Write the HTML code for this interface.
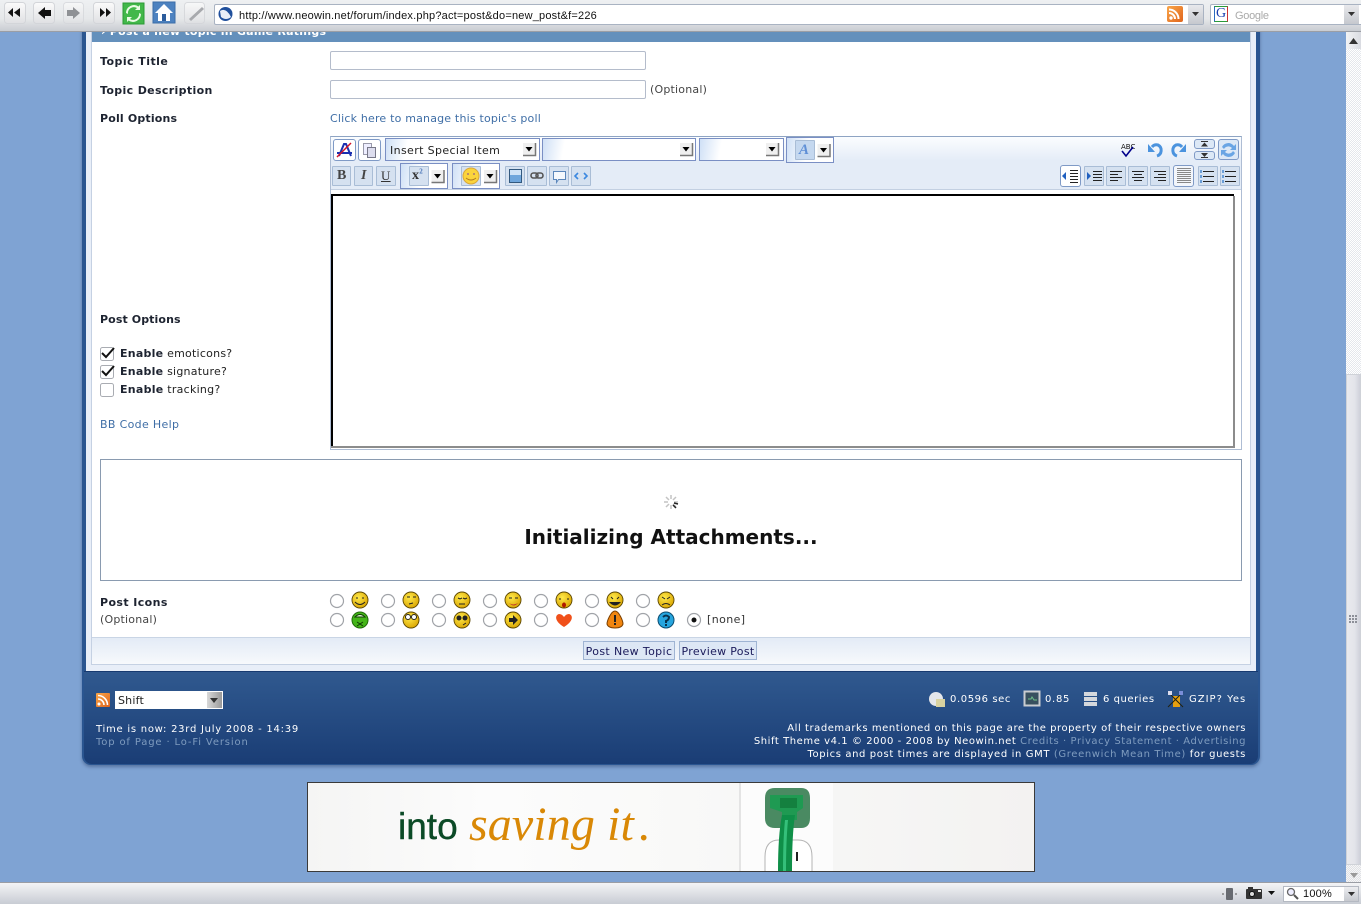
<!DOCTYPE html>
<html><head><meta charset="utf-8"><title>Post a new topic</title>
<style>
html,body{margin:0;padding:0;width:1361px;height:904px;overflow:hidden;background:#7fa3d3}
.a{position:absolute}
.t{position:absolute;white-space:nowrap;font:11px/14px "DejaVu Sans","Liberation Sans",sans-serif;color:#222;letter-spacing:.2px}
.b{font-weight:bold;color:#1d2330}
.l{color:#3f6ea6}
.f{font-size:10px;line-height:13px;color:#fff}
.f span{color:#7f9cbf}
.inp{position:absolute;left:330px;width:314px;height:17px;background:#fff;border:1px solid #b4bccb;border-radius:2px}
.sel{position:absolute;box-sizing:border-box;border:1px solid #7a8fc4;background:linear-gradient(100deg,#cfe0f6 0,#fff 22px)}
.btn{position:absolute;box-sizing:border-box;background:#d5e1f0;border:1px solid #a9bdd6;border-radius:1px}
.wb{background:#fff;border:1px solid #7f9ac6;border-radius:3px}
.sb{position:absolute;box-sizing:border-box;border:1px solid #9fb4d3;background:#dde7f5;font:11px/16px "DejaVu Sans",sans-serif;padding-top:2px;color:#1a1a5a;text-align:center;white-space:nowrap}
</style></head><body>

<!-- wrapper -->
<div class="a" style="left:82px;top:0;width:1178px;height:765px;background:#2a5590;border-radius:0 0 9px 9px;box-shadow:0 2px 3px rgba(40,60,100,.45)"></div>
<div class="a" style="left:86px;top:0;width:1170px;height:671px;background:#e8eef8"></div>
<div class="a" style="left:92px;top:0;width:1158px;height:664px;background:#fff;border:solid #c5d1e3;border-width:0 1px 1px 1px;margin-left:-1px"></div>
<div class="a" style="left:92px;top:25px;width:1158px;height:17px;background:#6490bc"></div>
<div class="t" style="left:101px;top:25px;color:#fff;font-weight:bold;letter-spacing:.25px">&#8250; Post a new topic in Game Ratings</div>

<!-- form labels -->
<div class="t b" style="left:100px;top:55px;letter-spacing:.45px">Topic Title</div>
<div class="t b" style="left:100px;top:84px;letter-spacing:.35px">Topic Description</div>
<div class="t b" style="left:100px;top:112px;letter-spacing:.17px">Poll Options</div>
<div class="inp" style="top:51px"></div>
<div class="inp" style="top:80px"></div>
<div class="t" style="left:650px;top:83px;color:#444">(Optional)</div>
<div class="t l" style="left:330px;top:112px;letter-spacing:.19px">Click here to manage this topic's poll</div>

<div class="t b" style="left:100px;top:313px;letter-spacing:.1px">Post Options</div>
<div class="t" style="left:120px;top:347px;letter-spacing:.24px"><b class="b">Enable</b> emoticons?</div>
<div class="t" style="left:120px;top:365px;letter-spacing:.24px"><b class="b">Enable</b> signature?</div>
<div class="t" style="left:120px;top:383px;letter-spacing:.27px"><b class="b">Enable</b> tracking?</div>
<div class="t l" style="left:100px;top:418px;letter-spacing:.33px">BB Code Help</div>

<!-- editor -->
<div class="a" style="left:330px;top:136px;width:910px;height:312px;border:1px solid #aebdd4;border-top-color:#8ea4c3;background:#fff"></div>
<div class="a" style="left:331px;top:137px;width:910px;height:52px;background:linear-gradient(#fbfdff,#e4ecf7 24px);border-bottom:1px solid #c3d0e2"></div>
<div class="a" style="left:331px;top:194px;width:901px;height:252px;background:#fff;border:solid #000;border-width:2px 0 0 2px"></div>
<div class="a" style="left:1233px;top:196px;width:2px;height:252px;background:#8c8c8c"></div>
<div class="a" style="left:331px;top:446px;width:904px;height:2px;background:#8c8c8c"></div>

<div class="btn wb" style="left:333px;top:139px;width:23px;height:22px"></div>
<div class="btn wb" style="left:358px;top:139px;width:23px;height:22px"></div>
<div class="sel" style="left:385px;top:138px;width:155px;height:23px"></div>
<div class="t" style="left:390px;top:144px;color:#222;letter-spacing:.37px">Insert Special Item</div>
<div class="sel" style="left:542px;top:138px;width:154px;height:23px"></div>
<div class="sel" style="left:699px;top:138px;width:85px;height:23px"></div>
<div class="sel" style="left:786px;top:137px;width:48px;height:26px"></div>
<div class="btn" style="left:795px;top:140px;width:20px;height:20px;background:#c5d8ef"></div>
<div class="btn" style="left:332px;top:166px;width:19px;height:20px"></div>
<div class="btn" style="left:354px;top:166px;width:19px;height:20px"></div>
<div class="btn" style="left:376px;top:166px;width:20px;height:20px"></div>
<div class="sel" style="left:400px;top:163px;width:48px;height:26px"></div>
<div class="btn" style="left:409px;top:166px;width:20px;height:20px"></div>
<div class="sel" style="left:452px;top:163px;width:48px;height:26px"></div>
<div class="btn" style="left:461px;top:166px;width:20px;height:20px"></div>
<div class="btn" style="left:505px;top:166px;width:20px;height:20px"></div>
<div class="btn" style="left:527px;top:166px;width:20px;height:20px"></div>
<div class="btn" style="left:549px;top:166px;width:20px;height:20px"></div>
<div class="btn" style="left:571px;top:166px;width:20px;height:20px"></div>
<div class="btn wb" style="left:1194px;top:139px;width:21px;height:10px;background:#dce8f6"></div>
<div class="btn wb" style="left:1194px;top:151px;width:21px;height:9px;background:#dce8f6"></div>
<div class="btn wb" style="left:1218px;top:139px;width:21px;height:21px;background:#dce8f6"></div>
<div class="btn wb" style="left:1060px;top:165px;width:21px;height:22px"></div>
<div class="btn" style="left:1084px;top:166px;width:20px;height:20px"></div>
<div class="btn" style="left:1106px;top:166px;width:20px;height:20px"></div>
<div class="btn" style="left:1128px;top:166px;width:20px;height:20px"></div>
<div class="btn" style="left:1150px;top:166px;width:20px;height:20px"></div>
<div class="btn wb" style="left:1173px;top:165px;width:21px;height:22px;background:#f3f6fb"></div>
<div class="btn" style="left:1198px;top:166px;width:20px;height:20px"></div>
<div class="btn" style="left:1220px;top:166px;width:20px;height:20px"></div>
<div class="t" style="left:337px;top:168px;font:bold 14px/16px 'Liberation Serif',serif;color:#444">B</div>
<div class="t" style="left:361px;top:168px;font:italic bold 14px/16px 'Liberation Serif',serif;color:#444">I</div>
<div class="t" style="left:381px;top:168px;font:13px/16px 'Liberation Serif',serif;color:#333;text-decoration:underline">U</div>
<div class="t" style="left:412px;top:168px;font:bold 14px/16px 'Liberation Serif',serif;color:#333">x<sup style="font-size:7px;line-height:0;color:#4b76b8">2</sup></div>
<div class="t" style="left:799px;top:142px;font:italic bold 15px/17px 'Liberation Serif',serif;color:#5f8fd6">A</div>
<div class="t" style="left:1121px;top:143px;font:7px/8px 'DejaVu Sans',sans-serif;color:#111;letter-spacing:0">ABC</div>

<!-- attachments -->
<div class="a" style="left:100px;top:459px;width:1140px;height:120px;border:1px solid #8a9bb0;background:#fff"></div>
<div class="t" style="left:100px;width:1142px;text-align:center;top:525px;font:bold 20px/25px 'DejaVu Sans',sans-serif;color:#111;letter-spacing:0">Initializing Attachments...</div>

<!-- post icons -->
<div class="t b" style="left:100px;top:596px;letter-spacing:.4px">Post Icons</div>
<div class="t" style="left:100px;top:613px;color:#444">(Optional)</div>
<div class="t" style="left:707px;top:613px;color:#333;letter-spacing:.4px">[none]</div>

<!-- submit bar -->
<div class="a" style="left:92px;top:637px;width:1158px;height:26px;border-top:1px solid #c9d5e5;background:linear-gradient(#e3ebf6,#f7f9fc)"></div>
<div class="sb" style="left:583px;top:641px;width:92px;height:19px;letter-spacing:.36px">Post New Topic</div>
<div class="sb" style="left:679px;top:641px;width:78px;height:19px;letter-spacing:.3px">Preview Post</div>

<!-- footer -->
<div class="a" style="left:84px;top:671px;width:1174px;height:92px;background:linear-gradient(#30598f,#1a3d75);border-top:1px solid #173a70;border-radius:0 0 8px 8px"></div>
<div class="a" style="left:115px;top:691px;width:108px;height:18px;background:#fff"></div>
<div class="a" style="left:207px;top:692px;width:15px;height:16px;background:linear-gradient(90deg,#d8d8d8,#9a9a9a)"></div>
<div class="t" style="left:118px;top:694px;color:#222">Shift</div>
<div class="t f" style="left:96px;top:723px;letter-spacing:.74px">Time is now: 23rd July 2008 - 14:39</div>
<div class="t f" style="left:96px;top:736px;letter-spacing:.85px"><span>Top of Page &#183; Lo-Fi Version</span></div>
<div class="t f" style="left:950px;top:693px;letter-spacing:.6px">0.0596 sec</div>
<div class="t f" style="left:1045px;top:693px;letter-spacing:.7px">0.85</div>
<div class="t f" style="left:1103px;top:693px;letter-spacing:.55px">6 queries</div>
<div class="t f" style="left:1189px;top:693px;letter-spacing:1px">GZIP? Yes</div>
<div class="t f" style="right:115px;top:722px;letter-spacing:.55px">All trademarks mentioned on this page are the property of their respective owners</div>
<div class="t f" style="right:115px;top:735px;letter-spacing:.56px">Shift Theme v4.1 &#169; 2000 - 2008 by Neowin.net <span>Credits &#183; Privacy Statement &#183; Advertising</span></div>
<div class="t f" style="right:115px;top:748px;letter-spacing:.62px">Topics and post times are displayed in GMT <span>(Greenwich Mean Time)</span> for guests</div>

<!-- ad -->
<div class="a" style="left:307px;top:782px;width:726px;height:88px;border:1px solid #3a3a3a;background:linear-gradient(90deg,#f5f5f4,#fcfcfc 25%,#f8f8f7 60%,#f3f2f1)"></div>
<div class="a" style="left:739px;top:783px;width:92px;height:88px;background:#fcfcfc;border-left:2px solid #e4e4e4"></div>
<div class="t" style="left:398px;top:805px;font:37px/44px 'Liberation Sans',sans-serif;color:#0b4a26;letter-spacing:0;-webkit-text-stroke:.4px #0b4a26">into</div>
<div class="t" style="left:469px;top:797px;font:italic 48px/56px 'Liberation Serif',serif;color:#d98806;letter-spacing:.1px">saving it<span style="margin-left:5px">.</span></div>

<!-- scrollbar -->
<div class="a" style="left:1346px;top:31px;width:15px;height:851px;background:repeating-conic-gradient(#fff 0 25%,#e4e7ec 0 50%) 0 0/2px 2px"></div>
<div class="a" style="left:1346px;top:374px;width:15px;height:491px;box-sizing:border-box;border:1px solid #cfd2d8;background:linear-gradient(90deg,#e9eaee,#e3e4ea 60%,#cfd1da)"></div>
<div class="a" style="left:1346px;top:32px;width:15px;height:17px;background:linear-gradient(90deg,#f2f3f5,#d9dbe1)"></div>
<div class="a" style="left:1346px;top:865px;width:15px;height:17px;background:repeating-conic-gradient(#f6f6f6 0 25%,#dfe1e6 0 50%) 0 0/2px 2px"></div>

<!-- top bar -->
<div class="a" style="left:0;top:0;width:1361px;height:31px;background:linear-gradient(#eef0f2,#e6e8ea 60%,#c9ccd2);border-bottom:1px solid #9b9ea5"></div>
<div class="a" style="left:214px;top:4px;width:988px;height:19px;background:#fff;border:1px solid #a9b3c2;border-radius:2px"></div>
<div class="a" style="left:1188px;top:5px;width:15px;height:19px;background:linear-gradient(#e8e9ec,#c5c8ce)"></div>
<div class="a" style="left:1210px;top:4px;width:151px;height:19px;background:#fff;border:1px solid #a9b3c2;border-radius:2px 0 0 2px"></div>
<div class="a" style="left:1344px;top:5px;width:15px;height:19px;background:linear-gradient(#e8e9ec,#c5c8ce)"></div>
<div class="t" style="left:239px;top:9px;font:11px/14px 'Liberation Sans',sans-serif;color:#111;letter-spacing:.2px">http://www.neowin.net/forum/index.php?act=post&amp;do=new_post&amp;f=226</div>
<div class="t" style="left:1235px;top:9px;font:11px/14px 'Liberation Sans',sans-serif;color:#aaa;letter-spacing:-.3px">Google</div>
<div class="t" style="left:1214px;top:6px;width:14px;height:16px;box-sizing:border-box;border:1px solid;border-color:#2a9a3a #c33 #2a9a3a #2a6ac0;font:14px/14px 'Liberation Serif',serif;color:#1a3fb0;text-align:center;letter-spacing:0">G</div>

<!-- status bar -->
<div class="a" style="left:0;top:882px;width:1361px;height:22px;background:linear-gradient(#f3f4f6,#e2e4e8 40%,#c8ccd4);border-top:1px solid #9a9da4;box-sizing:border-box"></div>
<div class="a" style="left:1283px;top:886px;width:76px;height:16px;background:#fff;border:1px solid #b4b9c2;box-sizing:border-box"></div>
<div class="a" style="left:1344px;top:887px;width:14px;height:14px;background:linear-gradient(#ecedf0,#c6c9cf)"></div>
<div class="t" style="left:1303px;top:887px;color:#111;font:11px/14px 'Liberation Sans',sans-serif;letter-spacing:.2px">100%</div>

<!-- icons -->
<svg class="a" style="left:0;top:0" width="1361" height="904" viewBox="0 0 1361 904" xmlns="http://www.w3.org/2000/svg">
<defs>
<radialGradient id="y" cx=".4" cy=".35" r=".7"><stop offset="0" stop-color="#ffe94a"/><stop offset="1" stop-color="#d9a400"/></radialGradient>
<linearGradient id="tb" x1="0" y1="0" x2="0" y2="1"><stop offset="0" stop-color="#fbfbfb"/><stop offset="1" stop-color="#dfe0e3"/></linearGradient>
<linearGradient id="rss" x1="0" y1="0" x2="1" y2="1"><stop offset="0" stop-color="#f9a64a"/><stop offset="1" stop-color="#e0651c"/></linearGradient>
<g id="r"><circle r="6.500" fill="#fff" stroke="#a0a3a8" stroke-width="1.200"/></g>
<g id="s"><circle r="8" fill="url(#y)" stroke="#5a4500" stroke-width=".9"/></g>
<g id="dd"><rect x="-6" y="-6" width="12" height="12" fill="#efefef"/><path d="M-6 6.500H6.500V-6" fill="none" stroke="#777" stroke-width="1.500"/><path d="M-3.500-2H3.500L0 2.500Z" fill="#000"/></g>
<clipPath id="adc"><rect x="741" y="783" width="92" height="88"/></clipPath>
</defs>

<!-- top bar buttons -->
<g stroke="#d3d5d9" fill="url(#tb)">
<rect x="4.500" y="2.500" width="21" height="21" rx="3"/><rect x="33.500" y="2.500" width="21" height="21" rx="3"/><rect x="63.500" y="2.500" width="20" height="21" rx="3" opacity=".7"/><rect x="93.500" y="2.500" width="21" height="21" rx="3"/><rect x="184.500" y="2.500" width="20" height="21" rx="3" opacity=".8"/>
</g>
<path d="M13 8v9l-5-4.500zM20 8v9l-6-4.500z" fill="#111"/>
<path d="M38 13l7-6v3h6v6h-6v3z" fill="#111"/>
<path d="M80 13l-7-6v3h-6v6h6v3z" fill="#8f9195"/>
<path d="M100 8v9l5-4.500zM106 8v9l5-4.500z" fill="#111"/>
<rect x="123" y="3" width="21" height="21" fill="#42b84a" stroke="#2b9a36"/>
<path d="M128 14a6 6 0 0 1 9-6l-2 2h5v-5l-1.500 1.500A8 8 0 0 0 126 13zM139 13a6 6 0 0 1-9 6l2-2h-5v5l1.500-1.500A8 8 0 0 0 141 14z" fill="#e9fbe4"/>
<rect x="153" y="2" width="22" height="21" fill="#4d82c0" stroke="#3b6da8"/>
<path d="M164 4l-9 9h3v8h12v-8h3z" fill="#fff"/><rect x="162" y="14" width="4" height="7" fill="#2b5c9c"/>
<path d="M189 19l13-12 2 2-13 12z" fill="#a7a9ad"/>
<circle cx="225.500" cy="14" r="7" fill="#1f4f9c"/><path d="M220 11q6-4 11 6q-5 4-10 0z" fill="#e8eef8"/>
<rect x="1167" y="6" width="16" height="16" rx="2" fill="url(#rss)"/>
<circle cx="1171" cy="18" r="1.700" fill="#fff"/><path d="M1169 13a6 6 0 0 1 6 6M1169 9.500a9.500 9.500 0 0 1 9.500 9.500" fill="none" stroke="#fff" stroke-width="2"/>
<path d="M1192 12h7l-3.500 4z" fill="#333"/><path d="M1348 12h7l-3.500 4z" fill="#333"/>

<!-- editor icons -->
<path d="M339 156l5-12h2l5 12" fill="none" stroke="#1a2fb0" stroke-width="2"/><path d="M337 153h15" stroke="#1a2fb0" stroke-width="2"/><path d="M337 157L351 143" stroke="#d3142a" stroke-width="1.500"/>
<rect x="363.500" y="143.500" width="8" height="11" fill="#eef" stroke="#99a"/><rect x="367.500" y="147.500" width="8" height="10" fill="#dde" stroke="#778"/>
<use href="#dd" x="529" y="149"/><use href="#dd" x="686" y="149"/><use href="#dd" x="772" y="149"/><use href="#dd" x="823.500" y="150"/><use href="#dd" x="437.500" y="176"/><use href="#dd" x="490" y="176"/>
<circle cx="471" cy="176" r="8" fill="#fbd43c" stroke="#d9a73a"/><circle cx="468" cy="174" r="1" fill="#a77"/><circle cx="474" cy="174" r="1" fill="#a77"/><path d="M466 178q5 4 10 0" fill="none" stroke="#b07a20"/>
<rect x="509.500" y="169.500" width="12" height="13" fill="#6fa6dc" stroke="#33597f"/><rect x="510" y="170" width="11" height="5" fill="#cfe3f7"/>
<g fill="none" stroke="#555" stroke-width="1.600"><rect x="531" y="173" width="7" height="5" rx="2.500"/><rect x="536" y="173" width="7" height="5" rx="2.500"/></g>
<path d="M553.500 171.500h12v8h-7l-2 3v-3h-3z" fill="#f4f8fd" stroke="#5a86bb"/>
<path d="M578 173l-3 3 3 3M584 173l3 3-3 3" fill="none" stroke="#3b88e0" stroke-width="1.600"/>
<path d="M1122 151l4 5 7-9" fill="none" stroke="#00008b" stroke-width="1.600"/>
<path d="M1157 156a6 6 0 0 0 1-11 6 6 0 0 0-6 2" fill="none" stroke="#4b93de" stroke-width="3"/><path d="M1148 144v8h7z" fill="#4b93de"/>
<path d="M1177 156a6 6 0 0 1-1-11 6 6 0 0 1 6 2" fill="none" stroke="#4b93de" stroke-width="3"/><path d="M1186 144v8h-7z" fill="#4b93de"/>
<path d="M1201 146.500l3.500-4 3.500 4zM1201 153l3.500 4 3.500-4z" fill="#333"/><path d="M1201 141.500h7M1201 157.500h7" stroke="#333"/>
<path d="M1222 147a7 7 0 0 1 12-1l2-2v6h-6l2-2a5 5 0 0 0-8 1zM1235 153a7 7 0 0 1-12 1l-2 2v-6h6l-2 2a5 5 0 0 0 8-1z" fill="#6aa5e4"/>
<g stroke="#222">
<path d="M1070 170.500h8M1070 173.500h8M1070 176.500h8M1070 179.500h8M1070 182.500h8"/><path d="M1093 171.500h9M1093 174.500h9M1093 177.500h9M1093 180.500h9"/>
<path d="M1110 171.500h12M1110 174.500h8M1110 177.500h12M1110 180.500h8"/><path d="M1132 171.500h12M1134 174.500h8M1132 177.500h12M1134 180.500h8"/><path d="M1154 171.500h12M1158 174.500h8M1154 177.500h12M1158 180.500h8"/>
<path d="M1203 171.500h11M1203 176.500h11M1203 181.500h11M1225 171.500h11M1225 176.500h11M1225 181.500h11"/>
</g>
<path d="M1066 172l-4 4 4 4zM1087 172l4 4-4 4z" fill="#2060c0"/>
<path d="M1177 168.500h14M1177 170.500h14M1177 172.500h14M1177 174.500h14M1177 176.500h14M1177 178.500h14M1177 180.500h14M1177 182.500h14" stroke="#888"/>
<path d="M1200 170h2v3h-2zM1200 175h2v3h-2zM1200 180h2v3h-2zM1222 170h2v3h-2zM1222 175h2v3h-2zM1222 180h2v3h-2z" fill="#6a9ed8"/>

<!-- checkboxes -->
<g fill="#fff" stroke="#a9acb2"><rect x="100.500" y="347.500" width="13" height="13" rx="2"/><rect x="100.500" y="365.500" width="13" height="13" rx="2"/><rect x="100.500" y="383.500" width="13" height="13" rx="2"/></g>
<path d="M102 353l4 4 8-9M102 371l4 4 8-9" fill="none" stroke="#111" stroke-width="2"/>

<!-- spinner -->
<g stroke="#c4c4c4" stroke-width="1.500">
<path d="M671 495v4M671 505v4M664 502h4M674 502h4M666 497l3 3M673 504l3 3M666 507l3-3M673 500l3-3"/>
<path d="M673 505l3 3M674 503l4 1" stroke="#222"/>
</g>

<!-- post icon radios -->
<use href="#r" x="337" y="601"/><use href="#r" x="388" y="601"/><use href="#r" x="439" y="601"/><use href="#r" x="490" y="601"/><use href="#r" x="541" y="601"/><use href="#r" x="592" y="601"/><use href="#r" x="643" y="601"/>
<use href="#r" x="337" y="620"/><use href="#r" x="388" y="620"/><use href="#r" x="439" y="620"/><use href="#r" x="490" y="620"/><use href="#r" x="541" y="620"/><use href="#r" x="592" y="620"/><use href="#r" x="643" y="620"/><use href="#r" x="694" y="620"/>
<circle cx="694" cy="620" r="2.500" fill="#111"/>
<use href="#s" x="360" y="600"/><use href="#s" x="411" y="600"/><use href="#s" x="462" y="600"/><use href="#s" x="513" y="600"/><use href="#s" x="564" y="600"/><use href="#s" x="615" y="600"/><use href="#s" x="666" y="600"/>
<use href="#s" x="411" y="620"/><use href="#s" x="462" y="620"/><use href="#s" x="513" y="620"/>
<g fill="none" stroke="#222" stroke-width="1">
<path d="M357 597v2M363 597v2M355 602q5 5 10 0"/><path d="M407 597h3M413 597h3M409 604l4-1"/><path d="M458 598l2 1 2-1M463 598l2 1 2-1M459 604h6"/>
<path d="M509 598h3M515 598h3"/><path d="M560 598v2M568 598v2"/><path d="M611 597l2 2M619 597l-2 2"/><path d="M662 597l3 2M670 597l-3 2M662 605q4-3 8 0"/>
<path d="M463 625l3-2"/>
</g>
<path d="M509 603q4 3 9 0q-4 5-9 0z" fill="#c0392b"/><ellipse cx="564" cy="605" rx="2" ry="2.500" fill="#b01a00"/><path d="M609 602h12q-6 7-12 0z" fill="#222"/>
<circle cx="360" cy="620" r="8" fill="#44b518" stroke="#1f6a08"/><path d="M355 617q5-5 10 0zM357 622l6 4M363 622l-6 4" stroke="#0f3a05" fill="#dff7d0"/>
<circle cx="408" cy="617" r="2.500" fill="#fff" stroke="#222"/><circle cx="414" cy="617" r="2.500" fill="#fff" stroke="#222"/>
<circle cx="459" cy="618" r="2.500" fill="#222"/><circle cx="465" cy="618" r="2.500" fill="#222"/>
<path d="M509 618h4v-3l5 5-5 5v-3h-4z" fill="#222"/>
<path d="M564 627c-10-6-9-12-5-13q3 0 5 3q2-3 5-3c4 1 5 7-5 13z" fill="#f0501a"/>
<path d="M615 611c4 0 8 10 8 13q-1 4-8 4t-8-4c0-3 4-13 8-13z" fill="#f0850f" stroke="#7a3f00"/><rect x="614" y="615" width="2" height="7" fill="#222"/><rect x="614" y="623" width="2" height="2" fill="#222"/>
<circle cx="666" cy="620" r="8" fill="#26a5de" stroke="#0a4c70"/>
<path d="M663 617q3-3 6 0q0 3-3 4v2" fill="none" stroke="#08324d" stroke-width="2"/><rect x="665" y="624" width="2" height="2" fill="#08324d"/>

<!-- footer icons -->
<rect x="96" y="693" width="14" height="14" rx="1" fill="url(#rss)"/><circle cx="99" cy="704" r="1.500" fill="#fff"/><path d="M98 699a6 6 0 0 1 6 6M98 695.500a9.500 9.500 0 0 1 9.500 9.500" fill="none" stroke="#fff" stroke-width="1.600"/>
<circle cx="936" cy="699" r="7" fill="#e4e6ea"/><rect x="936" y="699" width="9" height="8" fill="#d8d2a0"/>
<rect x="1024.500" y="691.500" width="15" height="14" fill="#38505f" stroke="#c9ccd0" stroke-width="2"/><path d="M1028 699h3l1-2 2 3h3" stroke="#6ec08a" fill="none"/>
<path d="M1084 692h13v4h-13zM1084 697h13v4h-13zM1084 702h13v4h-13z" fill="#d5d8dc"/>
<rect x="1173" y="696" width="7" height="11" fill="#e5a011"/><path d="M1168 692l15 15M1183 692l-15 15" stroke="#221"/><rect x="1168" y="691" width="4" height="4" fill="#dde"/><rect x="1179" y="691" width="4" height="4" fill="#7a8ed8"/>
<path d="M210 698h8l-4 5z" fill="#333"/>

<!-- ad plug -->
<g clip-path="url(#adc)">
<path d="M765 871v-14q0-17 14-17h19q14 0 14 17v14" fill="#fff" stroke="#b4b4b4"/>
<rect x="796" y="852" width="2" height="9" fill="#222"/>
<path d="M765 798q0-10 10-10h26q9 0 9 10v20q0 10-9 10h-26q-10 0-10-10z" fill="#4a8a62"/>
<path d="M770 795h33v13l-6 4v8h-15v-8l-12-4z" fill="#1f9a52"/>
<rect x="780" y="798" width="17" height="10" fill="#14803f"/>
<path d="M782 815q-4 20-4 56h14q0-36 3-56z" fill="#0f8f48"/><path d="M785 820q-2 20-2 51h3q0-30 2-51z" fill="#35c07a"/>
</g>

<!-- scrollbar arrows & grip -->
<path d="M1349 44h9l-4.500-6z" fill="#333"/>
<path d="M1350 873h8l-4 5z" fill="#999"/>
<g fill="#8d9099"><rect x="1349" y="615" width="2" height="2"/><rect x="1352" y="615" width="2" height="2"/><rect x="1355" y="615" width="2" height="2"/><rect x="1349" y="618" width="2" height="2"/><rect x="1352" y="618" width="2" height="2"/><rect x="1355" y="618" width="2" height="2"/><rect x="1349" y="621" width="2" height="2"/><rect x="1352" y="621" width="2" height="2"/><rect x="1355" y="621" width="2" height="2"/></g>

<!-- status icons -->
<rect x="1226" y="888" width="7" height="12" rx="1" fill="#676a70"/><path d="M1222 894h2M1235 894h2" stroke="#555"/>
<rect x="1246" y="889" width="16" height="10" rx="1" fill="#333"/><rect x="1248" y="887" width="5" height="3" fill="#333"/><circle cx="1252" cy="894" r="2.500" fill="#ddd" stroke="#111"/><rect x="1258" y="890" width="3" height="2" fill="#eee"/>
<path d="M1268 891h7l-3.500 4z" fill="#111"/>
<circle cx="1291" cy="892" r="3.500" fill="#eef" stroke="#666" stroke-width="1.300"/><path d="M1294 895l4 4" stroke="#555" stroke-width="2"/>
<path d="M1348 892h7l-3.500 4z" fill="#333"/>
</svg>
</body></html>
